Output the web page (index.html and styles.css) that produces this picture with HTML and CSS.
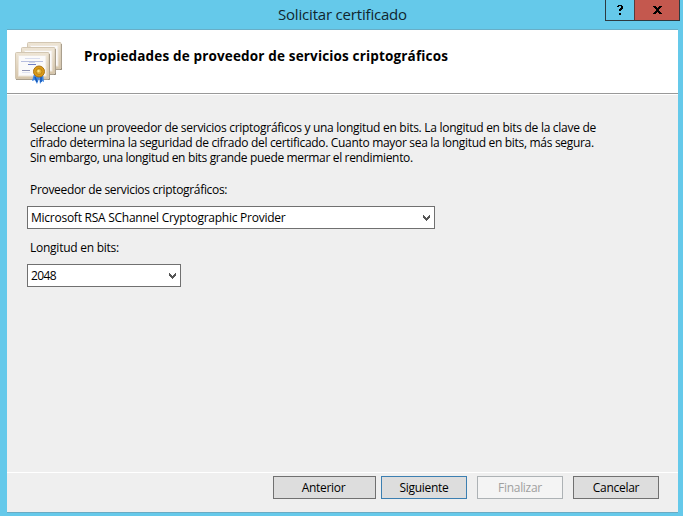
FILE: index.html
```html
<!DOCTYPE html>
<html lang="es">
<head>
<meta charset="utf-8">
<title>Solicitar certificado</title>
<link rel="stylesheet" href="styles.css">
</head>
<body>
<div class="window">
  <header class="titlebar">
    <h1 class="title">Solicitar certificado</h1>
    <div class="controls">
      <button class="control help" aria-label="Ayuda"><svg width="7" height="10" viewBox="0 0 7 10" shape-rendering="crispEdges"><path d="M1 0h4v1h1v3h-1v1h-1v1h-2v-2h1v-1h1v-2h-2v1h-2v-1h1zM2 8h2v2h-2z"/></svg></button>
      <button class="control close" aria-label="Cerrar"><svg width="9" height="8" viewBox="0 0 9 8" shape-rendering="crispEdges"><path d="M0 0h3v1h1v1h1v-1h1v-1h3v1h-1v1h-1v1h-1v2h1v1h1v1h1v1h-3v-1h-1v-1h-1v1h-1v1h-3v-1h1v-1h1v-1h1v-2h-1v-1h-1v-1h-1z"/></svg></button>
    </div>
  </header>
  <main class="client">
    <section class="banner">
      <svg class="certificates" width="50" height="44" viewBox="0 0 50 44">
        <defs>
          <linearGradient id="edge" x1="0" y1="0" x2="0" y2="1"><stop offset="0" stop-color="#eee5d5"/><stop offset="1" stop-color="#d6c5aa"/></linearGradient>
          <g id="sheet">
            <path d="M1 27.500h33.500V2" fill="none" stroke="#817767" stroke-width="1"/>
            <rect x=".5" y=".5" width="33.500" height="26.500" rx="1" fill="url(#edge)" stroke="#d3c7b3"/>
            <rect x="3.500" y="3.500" width="27.500" height="20.500" fill="#fbfafa" stroke="#eee7dc"/>
          </g>
        </defs>
        <use href="#sheet" x="13" y="1"/>
        <use href="#sheet" x="7" y="6"/>
        <use href="#sheet" x="1" y="11"/>
        <g stroke="#b8bfdf" fill="none"><path d="M11 17.500h15" opacity=".5"/><path d="M7 20.500h22"/><path d="M15 21.500h6" opacity=".6"/><path d="M14 23.500h8" stroke="#7180c5"/><path d="M8 29.500h8" stroke="#9195b5"/><path d="M8 31.500h8" opacity=".4"/></g>
        <path d="M20 33l-2 7 3-1 2 4 3-8zM25 35l1 8 2-3 2 1-1-8z" fill="#3c86e2"/>
        <path d="M21 36l2 5M27 36l0 5" stroke="#1757b5" stroke-width="1.500"/>
        <circle cx="25" cy="30.500" r="5.500" fill="#d99a19" stroke="#ad7411"/>
        <circle cx="25" cy="30.500" r="3" fill="#e3af35" stroke="#b47b12" stroke-width=".8"/>
        <circle cx="24.500" cy="30" r="1.200" fill="#fae58b"/>
      </svg>
      <h2 class="heading">Propiedades de proveedor de servicios criptográficos</h2>
    </section>
    <section class="content">
      <p class="intro"><span class="line first">Seleccione un proveedor de servicios criptográficos y una longitud en bits. La longitud en bits de la clave de</span><span class="line second">cifrado determina la seguridad de cifrado del certificado. Cuanto mayor sea la longitud en bits, más segura.</span><span class="line third">Sin embargo, una longitud en bits grande puede mermar el rendimiento.</span></p>
      <label class="label provider-label">Proveedor de servicios criptográficos:</label>
      <div class="select provider"><span class="value">Microsoft RSA SChannel Cryptographic Provider</span><svg width="7" height="6" viewBox="0 0 7 6" shape-rendering="crispEdges"><path d="M0 0h1v1h1v1h1v1h1v-1h1v-1h1v-1h1v3h-1v1h-1v1h-1v1h-1v-1h-1v-1h-1v-1h-1z"/></svg></div>
      <label class="label bits-label">Longitud en bits:</label>
      <div class="select bits"><span class="value">2048</span><svg width="7" height="6" viewBox="0 0 7 6" shape-rendering="crispEdges"><path d="M0 0h1v1h1v1h1v1h1v-1h1v-1h1v-1h1v3h-1v1h-1v1h-1v1h-1v-1h-1v-1h-1v-1h-1z"/></svg></div>
    </section>
    <footer class="actions">
      <button class="action previous">Anterior</button>
      <button class="action next">Siguiente</button>
      <button class="action finish" disabled>Finalizar</button>
      <button class="action cancel">Cancelar</button>
    </footer>
  </main>
</div>
</body>
</html>
```
FILE: styles.css
```css
* { box-sizing: border-box; }
body { margin: 0; font: 12px/15px "Open Sans", "Noto Sans", sans-serif; color: #000; }
.window { display: flex; flex-direction: column; width: 683px; height: 516px; padding: 0 5px 3px 7px; background: #65c9ea; }
.titlebar { display: flex; flex: 0 0 29px; }
.title { flex: 1; margin: 0; padding-left: 271px; font-size: 15px; line-height: 29px; font-weight: 400; letter-spacing: -.19px; white-space: nowrap; color: #10262e; }
.controls { display: flex; width: 75px; height: 21px; margin-right: -2px; border: 1px solid #2d3a40; border-top: 0; }
.control { display: flex; align-items: center; justify-content: center; padding: 0; border: 0; background: #65c9ea; }
.help { width: 28px; }
.close { width: 45px; border-left: 1px solid #5b3a3a; background: #c4584e; }
.client { display: flex; flex: 1; flex-direction: column; min-height: 0; border-top: 1px solid #68aec7; border-bottom: 1px solid #69abc4; background: #efefef; }
.banner { display: flex; flex: 0 0 65px; background: #fff; border-bottom: 1px solid #fff; box-shadow: inset 0 -1px #999; }
.certificates { margin: 11px 0 0 7px; }
.heading { margin: 18px 0 0 20px; font-size: 13.5px; line-height: 16px; font-weight: 700; letter-spacing: .16px; white-space: nowrap; }
.content { flex: 1; padding: 25px 0 0 20px; white-space: nowrap; }
.intro { margin: 0 0 0 3px; }
.line { display: block; }
.first { letter-spacing: -.286px; }
.second { letter-spacing: -.315px; }
.third { letter-spacing: -.34px; }
.label { display: block; margin-left: 3px; }
.provider-label { margin-top: 17px; letter-spacing: -.32px; }
.bits-label { margin-top: 11px; letter-spacing: -.25px; }
.select { display: flex; align-items: center; justify-content: space-between; height: 23px; margin-top: 9px; padding: 0 4px 0 3px; border: 1px solid #707070; background: #fff; fill: #555; }
.value { letter-spacing: -.255px; }
.bits .value { letter-spacing: -.65px; }
.provider { width: 408px; }
.bits { width: 154px; }
.actions { display: flex; flex: 0 0 40px; padding: 3px 19px 0 266px; border-top: 1px solid #fff; }
.action { height: 23px; padding: 0; border: 1px solid #707070; background: #ddd; color: #000; font: inherit; line-height: 21px; letter-spacing: -.3px; }
.previous { width: 103px; padding-right: 2px; }
.next { width: 86px; margin-left: 5px; border-color: #3c7fb1; }
.finish { width: 86px; margin-left: 10px; border-color: #adb2b5; background: #f4f4f4; color: #a0a0a0; }
.cancel { width: 86px; margin-left: 10px; }
```
